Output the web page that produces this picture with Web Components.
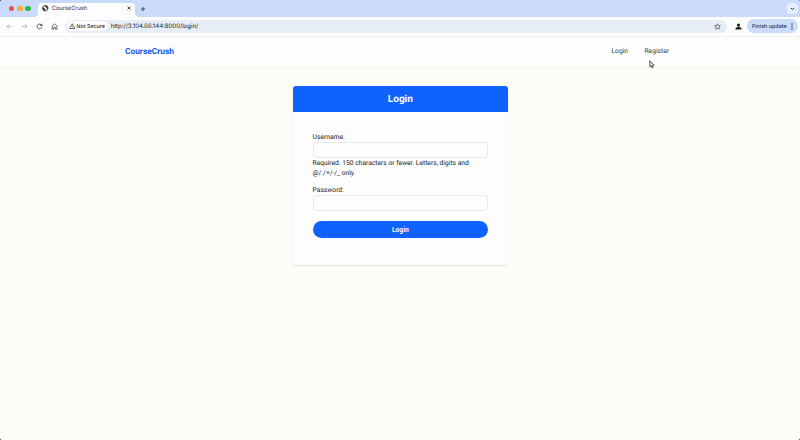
<!DOCTYPE html>
<html lang="en">
<head>
<meta charset="utf-8">
<title>CourseCrush</title>
<style>
html,body{margin:0;height:100%}
body{overflow:hidden;background:#333}
</style>
</head>
<body>
<browser-window>
  <tab-strip slot="tabs">CourseCrush</tab-strip>
  <tool-bar slot="tools" url="http://3.104.66.144:8000/login/"></tool-bar>
  <site-nav><span slot="brand">CourseCrush</span><nav-link>Login</nav-link><nav-link>Register</nav-link></site-nav>
  <login-card heading="Login">
    <form-field label="Username:">Required. 150 characters or fewer. Letters, digits and @/./+/-/_ only.</form-field>
    <form-field label="Password:"></form-field>
    <submit-button>Login</submit-button>
  </login-card>
</browser-window>
<mouse-pointer></mouse-pointer>
<script>
const define = (name, html) => customElements.define(name, class extends HTMLElement {
  connectedCallback() {
    if (this.shadowRoot) return;
    const t = document.createElement('template');
    t.innerHTML = typeof html === 'function' ? html(this) : html;
    this.attachShadow({mode: 'open'}).append(t.content.cloneNode(true));
  }
});

define('browser-window', `<style>
:host{display:flex;flex-direction:column;height:440px;width:800px;box-sizing:border-box;background:#fcfdf6;border-radius:3px 2px 2px 2px;overflow:hidden;font-family:Roboto,sans-serif;color:#16191c;text-rendering:geometricPrecision}
</style><slot name="tabs"></slot><slot name="tools"></slot><slot></slot>`);

define('tab-strip', `<style>
:host{display:flex;height:17px;background:#c9dafa;align-items:center;box-sizing:border-box;padding:0 2px 0 8.5px;font:5.7px Inter,sans-serif;color:#27292c}
.lights{display:flex;gap:2.5px;width:29.5px}
.lights i{width:5.8px;height:5.8px;border-radius:50%}
.tab{display:flex;align-items:center;align-self:flex-end;width:97px;height:14.5px;box-sizing:border-box;background:#fdfdfe;border-radius:4px 4px 0 0;padding:0 4px 3px;position:relative}
.tab:before,.tab:after{content:"";position:absolute;bottom:0;width:4px;height:4px}
.tab:before{left:-4px;background:radial-gradient(circle at 0 0,transparent 3.7px,#fdfdfe 4.2px)}
.tab:after{right:-4px;background:radial-gradient(circle at 100% 0,transparent 3.7px,#fdfdfe 4.2px)}
.name{margin-left:3.3px;flex:1}
svg{display:block}
.plus{margin-left:5.3px;flex:none}
.menu{margin-left:auto;width:11px;height:11px;border-radius:4px;background:#e6edfb;display:grid;place-items:center}
</style>
<div class="lights"><i style="background:#ee4e45"></i><i style="background:#f3ad2e"></i><i style="background:#31b944"></i></div>
<div class="tab">
<svg width="6.5" height="6.5" viewBox="0 0 14 14"><circle cx="7" cy="7" r="6.1" fill="#fff" stroke="#34373b" stroke-width="1.5"/><path d="M1 5l4 1 1 2 2 1-1 4C3 13 0 9 1 5zM5 1l1 3 3 1 1 3 3 1c1-5-3-9-8-8z" fill="#34373b"/></svg>
<span class="name"><slot></slot></span>
<svg width="4" height="4" viewBox="0 0 4 4"><path d="M.5.5l3 3m0-3l-3 3" stroke="#222" stroke-width=".8"/></svg></div>
<svg class="plus" width="6" height="6" viewBox="0 0 6 6"><path d="M3 .8v4.4M.8 3h4.4" stroke="#30343b" stroke-width=".8"/></svg>
<div class="menu"><svg width="5" height="4" viewBox="0 0 5 4"><path d="M1 1l1.5 1.5L4 1" fill="none" stroke="#24282e"/></svg></div>`);

define('tool-bar', el => `<style>
:host{display:flex;height:20px;flex:none;background:#fdfdfe;align-items:center;box-sizing:border-box;padding:0 2px 1px 6px;border-bottom:1px solid #f0f1f3;font:5.8px Inter,sans-serif;color:#1c1e21}
svg{display:block;flex:none}
.icons{display:flex;gap:7.9px;width:59px}
.omni{display:flex;align-items:center;width:662px;box-sizing:border-box;height:13px;background:#e7edf6;border-radius:7px;padding:0 6.5px 0 2px}
.secure{display:flex;align-items:center;box-sizing:border-box;width:40.5px;height:10.5px;border-radius:6px;background:#fdfdfe;padding-left:2.2px;gap:.9px;font-weight:500;font-size:5.3px;white-space:nowrap}
.secure span,.url,.update span{padding-top:1px}
.url{margin-left:3.2px;flex:1;font-size:6.05px;white-space:nowrap}
.person{margin-left:7.5px}
.update{margin-left:auto;display:flex;align-items:center;justify-content:space-between;box-sizing:border-box;width:51px;height:14px;border-radius:7px;background:#cbdbfa;padding:0 5px;font-weight:500;font-size:5.4px;color:#203969;white-space:nowrap}
</style>
<div class="icons">
<svg width="7" height="7" viewBox="0 0 7 7"><path d="M6 3.5H1M3.3 1.2L1 3.5l2.3 2.3" fill="none" stroke="#a5a7aa" stroke-width=".7"/></svg>
<svg width="7" height="7" viewBox="0 0 7 7"><path d="M1 3.5h5M3.7 1.2L6 3.5 3.7 5.8" fill="none" stroke="#a5a7aa" stroke-width=".7"/></svg>
<svg width="7" height="7" viewBox="0 0 7 7"><path d="M5.7 2.4A2.4 2.4 0 1 0 5.9 4M5.9.9v1.7H4.1" fill="none" stroke="#36393d" stroke-width=".85"/></svg>
<svg width="7" height="7" viewBox="0 0 7 7"><path d="M1.2 2.8L3.5.9l2.3 1.9v3.5H4.3V4.2H2.7v2.1H1.2z" fill="none" stroke="#44474b" stroke-width=".75"/></svg>
</div>
<div class="omni"><div class="secure"><svg width="6.5" height="6" viewBox="0 0 13 12"><path d="M6.5 1.5L12 11H1z" fill="none" stroke="#303338" stroke-width="1.4"/><path d="M6.5 5v2.5m0 .8v1.2" stroke="#303338" stroke-width="1.2"/></svg><span>Not Secure</span></div>
<span class="url">${el.getAttribute('url')}</span>
<svg width="7" height="7" viewBox="0 0 14 14"><path d="M7 1.5l1.7 3.6 4 .5-3 2.7.8 3.9L7 10.3l-3.5 1.9.8-3.9-3-2.7 4-.5z" fill="none" stroke="#34373b" stroke-width="1.3"/></svg></div>
<svg class="person" width="7" height="7" viewBox="0 0 7 7"><circle cx="3.5" cy="2.1" r="1.6" fill="#202226"/><path d="M.5 6.4V5.5c0-2 6-2 6 0v.9z" fill="#202226"/></svg>
<div class="update"><span>Finish update</span><svg width="2" height="7" viewBox="0 0 2 7"><g fill="#1d2e57"><circle cx="1" cy="1" r=".75"/><circle cx="1" cy="3.5" r=".75"/><circle cx="1" cy="6" r=".75"/></g></svg></div>`);

define('site-nav', `<style>
:host{display:flex;flex:none;height:29.5px;box-sizing:border-box;background:#fdfdfe;box-shadow:0 .5px 1.5px rgba(0,0,0,.1);align-items:center;padding:0 131px 1px 125px;gap:16.5px}
.brand{margin-right:auto;padding-top:1.4px;font-weight:700;font-size:8.35px;color:#1259e8}
</style><div class="brand"><slot name="brand"></slot></div><slot></slot>`);

define('nav-link', `<style>:host{display:block;font-size:6.7px;color:#36393d}</style><slot></slot>`);

define('login-card', el => `<style>
:host{display:block;box-sizing:border-box;width:215.5px;height:179px;margin:19.7px 0 0 292.6px;border-radius:3px;background:#fdfdfe;box-shadow:0 .5px 1.5px rgba(0,0,0,.12);overflow:hidden}
header{height:26px;background:#0f62fe;color:#fff;display:flex;align-items:center;justify-content:center;box-sizing:border-box;padding-top:.7px;font-size:10px;font-weight:700}
.body{padding:20.3px 20px 0}
</style><header>${el.getAttribute('heading')}</header><div class="body"><slot></slot></div>`);

define('form-field', el => `<style>
:host{display:block;font-size:6.7px;line-height:10px;margin-bottom:6.9px}
label{display:block;height:10px;line-height:11px}
input{display:block;box-sizing:border-box;width:100%;height:16px;border:1px solid #e7eaed;border-radius:3px;background:#fdfdfe;margin:0;padding:0 4px}
</style><label>${el.getAttribute('label')}</label><input><slot></slot>`);

define('submit-button', `<style>
:host{display:block;margin-top:9.6px}
button{display:block;width:100%;height:17.3px;border:0;border-radius:9px;background:#0f62fe;color:#fff;font:700 6.7px Roboto,sans-serif;padding:0}
</style><button><slot></slot></button>`);

define('mouse-pointer', `<style>:host{position:absolute;left:649px;top:60px}svg{display:block}</style>
<svg width="6" height="9" viewBox="0 0 6 9"><path d="M.8.8v6l1.4-1.2.9 2.3 1.1-.5-.9-2.1h1.8z" fill="#eee" stroke="#303030" stroke-width=".8"/></svg>`);
</script>
</body>
</html>
